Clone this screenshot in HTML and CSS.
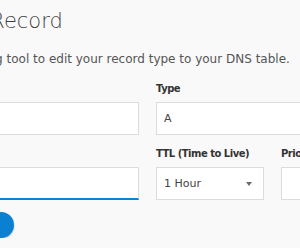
FILE: index.html
```html
<!DOCTYPE html>
<html lang="en">
<head>
  <meta charset="UTF-8">
  <meta name="viewport" content="width=device-width, initial-scale=1.0">
  <title>Edit DNS Record</title>
  <link rel="stylesheet" href="styles.css">
</head>
<body>
  <div class="page">
    <h1 class="title">Edit DNS Record</h1>
    <p class="lead">Use the following tool to edit your record type to your DNS table.</p>

    <!-- Record fields -->
    <form class="fields">
      <div class="field wide">
        <label for="host">Host Name</label>
        <input type="text" id="host" class="box">
      </div>

      <div class="field wide">
        <label for="type">Type</label>
        <input type="text" id="type" class="box" value="A">
      </div>

      <div class="field wide">
        <label for="value">Points To</label>
        <input type="text" id="value" class="box focused">
      </div>

      <div class="field">
        <label>TTL (Time to Live)</label>
        <div class="box select">
          <span>1 Hour</span>
          <svg class="caret" width="6" height="4" viewBox="0 0 6 4"><path d="M0 0h6L3 4z" fill="#6b6b6b"/></svg>
        </div>
      </div>

      <div class="field">
        <label for="priority">Priority</label>
        <input type="text" id="priority" class="box">
      </div>
    </form>

    <button type="button" class="save-btn">Save</button>
  </div>
</body>
</html>
```

FILE: styles.css
```css
/* Reset */
body, html {
  margin: 0;
  padding: 0;
  background: #f9f9f9;
  font-family: "DejaVu Sans", sans-serif;
  overflow: hidden;
}

/* Page, scrolled so its left edge is out of view */
.page {
  width: 500px;
  margin-left: -94px;
  padding-top: 9px;
}

.title {
  margin: 0;
  font-size: 21px;
  line-height: 24px;
  font-weight: 200;
  color: #3f3f3f;
  text-indent: -15px;
}

.lead {
  margin: 18px 0 0;
  font-size: 12px;
  line-height: 16px;
  color: #555;
  text-indent: -7px;
}

/* Form grid */
.fields {
  display: grid;
  grid-template-columns: repeat(4, 108px);
  column-gap: 17px;
  row-gap: 11px;
  margin-top: 14px;
}

.field.wide {
  grid-column: span 2;
}

.field label {
  display: block;
  margin-bottom: 5px;
  font-size: 10px;
  line-height: 16px;
  font-weight: bold;
  letter-spacing: -0.5px;
  white-space: nowrap;
  color: #333;
}

.box {
  display: block;
  box-sizing: border-box;
  width: 100%;
  height: 33px;
  margin: 0;
  padding: 0 7px;
  background: #fff;
  border: 1px solid #dcdcdc;
  border-radius: 0;
  font-family: inherit;
  font-size: 11px;
  color: #444;
  outline: none;
}

.box.focused {
  border-bottom: 2px solid #0a84d6;
}

.select {
  display: flex;
  align-items: center;
  justify-content: space-between;
  padding-right: 11px;
}

.caret {
  display: block;
}

.save-btn {
  display: block;
  width: 108px;
  height: 26px;
  margin-top: 12px;
  border: none;
  border-radius: 13px;
  background: #0a80d2;
  box-shadow: 0 1px 2px rgba(0, 0, 0, 0.25);
  color: #fff;
  font-family: inherit;
  font-size: 12px;
}
```
